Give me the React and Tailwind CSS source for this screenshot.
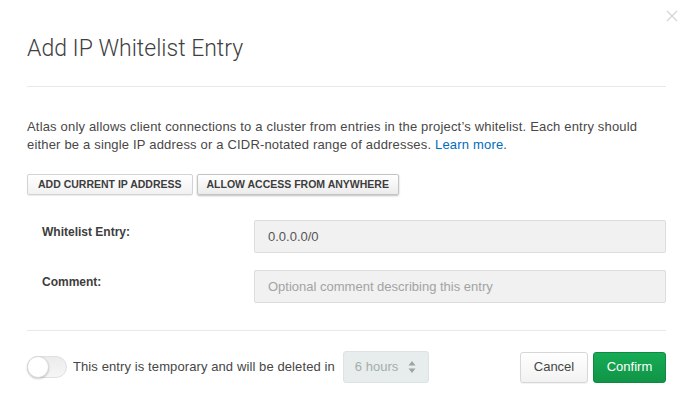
export default function App() {
  return (
    <div className="relative w-[693px] h-[416px] bg-white font-['Liberation_Sans',Arial,sans-serif] text-[#494747] overflow-hidden">
      {/* close */}
      <button className="absolute right-[15px] top-[10px] w-[12px] h-[12px] text-[#d4d4d4]">
        <svg viewBox="0 0 12 12" width="12" height="12" fill="none" stroke="currentColor" strokeWidth="1.2">
          <path d="M1 1 L11 11 M11 1 L1 11" />
        </svg>
      </button>

      <div className="px-[27px]">
        <h2 className="pt-[33px] pb-[21px] text-[23px] leading-[32px] font-light font-['Roboto',sans-serif] text-[#3f3f3f] border-b border-[#e8e8e8]">
          Add IP Whitelist Entry
        </h2>

        <div className="mt-[31px] text-[13px] leading-[18px] tracking-[0.18px] text-[#494747]">
          <div>
            Atlas only allows client connections to a cluster from entries in the project’s whitelist. Each entry should
          </div>
          <div>
            <span>either be a single IP address or a CIDR-notated range of addresses. </span>
            <span className="text-[#006cbc]">Learn more</span>
            <span>.</span>
          </div>
        </div>

        <div className="mt-[20px] flex gap-[4px]">
          <button className="h-[21px] px-[10px] text-[10.5px] font-bold text-[#3d3d3d] rounded-[2px] border border-[#d3d3d3] bg-gradient-to-b from-white to-[#f1f1f1] shadow-[0_1px_1px_rgba(0,0,0,0.08)]">
            ADD CURRENT IP ADDRESS
          </button>
          <button className="h-[21px] px-[9px] text-[10.5px] font-bold text-[#3d3d3d] rounded-[2px] border border-[#c4c4c4] bg-gradient-to-b from-white to-[#ececec] shadow-[0_1px_2px_rgba(0,0,0,0.25)]">
            ALLOW ACCESS FROM ANYWHERE
          </button>
        </div>

        <div className="mt-[25px] flex flex-col gap-[17px]">
          <div className="flex items-start">
            <label className="ml-[15px] w-[212px] pt-[3px] text-[12px] font-bold text-[#3d3d3d]">
              Whitelist Entry:
            </label>
            <div className="flex-1 h-[33px] flex items-center px-[13px] bg-[#f1f1f1] border border-[#dcdcdc] rounded-[2px] text-[13px] text-[#555]">
              0.0.0.0/0
            </div>
          </div>
          <div className="flex items-start">
            <label className="ml-[15px] w-[212px] pt-[3px] text-[12px] font-bold text-[#3d3d3d]">
              Comment:
            </label>
            <div className="flex-1 h-[33px] flex items-center px-[13px] bg-[#f1f1f1] border border-[#dcdcdc] rounded-[2px] text-[13px] text-[#a3a3a3]">
              Optional comment describing this entry
            </div>
          </div>
        </div>

        <div className="mt-[27px] border-t border-[#e8e8e8] pt-[20px] flex items-center">
          <div className="relative w-[40px] h-[22px] rounded-full bg-gradient-to-b from-[#ececec] to-[#f6f6f6] border border-[#e0e0e0]">
            <div className="absolute left-[-1px] top-[-1px] w-[22px] h-[22px] rounded-full bg-white border border-[#dadada] shadow-[0_1px_2px_rgba(0,0,0,0.2)]" />
          </div>
          <span className="ml-[6px] text-[13px] tracking-[0.1px] text-[#464646]">
            This entry is temporary and will be deleted in
          </span>
          <div className="ml-[8px] w-[86px] h-[32px] flex items-center justify-between pl-[11px] pr-[12px] rounded-[3px] border border-[#dde3e2] bg-[#e6edec] text-[13px] text-[#a6acab]">
            <span>6 hours</span>
            <svg width="8" height="14" viewBox="0 0 8 14" fill="#9ea4a3">
              <path d="M4 1 L7.5 5.5 H0.5 Z M4 13 L7.5 8.5 H0.5 Z" />
            </svg>
          </div>

          <div className="ml-auto flex gap-[5px]">
            <button className="w-[68px] h-[31px] text-[13px] text-[#464646] rounded-[3px] border border-[#d7d7d7] bg-gradient-to-b from-white to-[#f2f2f2] shadow-[0_1px_1px_rgba(0,0,0,0.06)]">
              Cancel
            </button>
            <button className="w-[73px] h-[31px] text-[13px] text-white rounded-[3px] border border-[#0f8a42] bg-gradient-to-b from-[#16ac55] to-[#119447]">
              Confirm
            </button>
          </div>
        </div>
      </div>
    </div>
  );
}
